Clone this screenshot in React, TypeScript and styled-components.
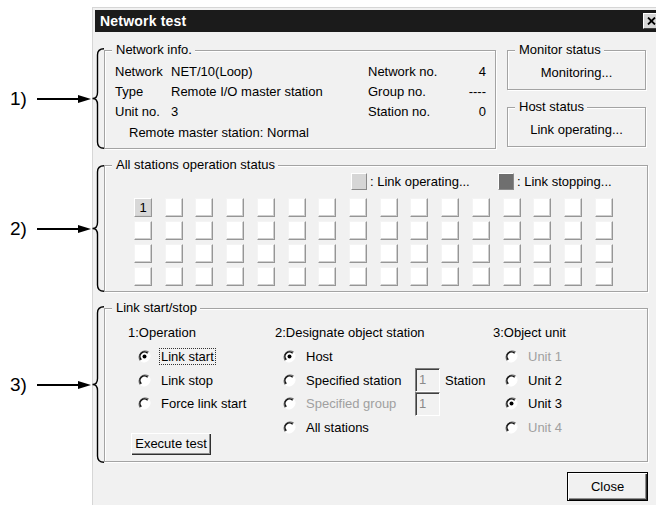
import React from "react";
import styled, { createGlobalStyle } from "styled-components";

const GlobalStyle = createGlobalStyle`
  html, body {
    margin: 0;
    padding: 0;
    background: #fff;
    overflow: hidden;
  }
  body {
    font-family: "Liberation Sans", Arial, sans-serif;
    font-size: 13px;
    color: #000;
  }
`;

const FACE = "#f1f1f1";

const Page = styled.div`
  position: relative;
  width: 656px;
  height: 505px;
  padding: 7px 0 0 92px;
  box-sizing: border-box;
  overflow: hidden;
`;

const Dialog = styled.div`
  width: 570px;
  height: 520px;
  box-sizing: border-box;
  border: 1px solid #d6d6d6;
  padding: 2px;
  background: ${FACE};
`;

const TitleBar = styled.div`
  height: 22px;
  background: #1b1b1b;
  display: flex;
  align-items: center;
  justify-content: space-between;
  padding-left: 5px;
`;

const Title = styled.span`
  color: #fff;
  font-weight: 700;
  font-size: 14px;
  letter-spacing: 0.2px;
`;

const CloseBox = styled.div`
  width: 16px;
  height: 16px;
  box-sizing: border-box;
  background: #d6d6d6;
  border-top: 1px solid #fff;
  border-left: 1px solid #fff;
  border-right: 1px solid #404040;
  border-bottom: 1px solid #404040;
  display: flex;
  align-items: center;
  justify-content: center;
`;

const Body = styled.div`
  padding: 18px 0 0 9px;
  width: 544px;
`;

const TopRow = styled.div`
  display: flex;
  align-items: flex-start;
`;

const SideColumn = styled.div`
  margin-left: 11px;
  display: flex;
  flex-direction: column;
  gap: 17px;
`;

const Group = styled.div<{ $w?: number; $h: number; $mt?: number }>`
  position: relative;
  box-sizing: border-box;
  width: ${({ $w }) => ($w ? `${$w}px` : "100%")};
  height: ${({ $h }) => $h}px;
  margin-top: ${({ $mt }) => $mt ?? 0}px;
  border: 1px solid #a3a3a3;
  box-shadow: 1px 1px 0 #fff, inset 1px 1px 0 #fff;
`;

const Legend = styled.span`
  position: absolute;
  top: -9px;
  left: 7px;
  padding: 0 3px 0 4px;
  background: ${FACE};
  line-height: 16px;
`;

const InfoGrid = styled.div`
  display: grid;
  grid-template-columns: 56px 197px 1fr auto;
  line-height: 20px;
  padding: 11px 9px 0 10px;
`;

const Value = styled.span<{ $right?: boolean }>`
  text-align: ${({ $right }) => ($right ? "right" : "left")};
`;

const InfoNote = styled.div`
  line-height: 20px;
  padding: 1px 0 0 24px;
`;

const StatusText = styled.div`
  text-align: center;
  line-height: 20px;
  padding-top: 12px;
`;

const LegendRow = styled.div`
  display: grid;
  grid-template-columns: 147px auto;
  padding: 7px 0 0 246px;
  height: 17px;
`;

const LegendItem = styled.div`
  display: flex;
  align-items: center;
  gap: 3px;
`;

const Swatch = styled.span<{ $dark?: boolean }>`
  width: 16px;
  height: 17px;
  box-sizing: border-box;
  background: ${({ $dark }) => ($dark ? "#6f6f6f" : "#d6d6d6")};
  border-top: 1px solid #fff;
  border-left: 1px solid #fff;
  border-right: 1px solid #8a8a8a;
  border-bottom: 1px solid #8a8a8a;
`;

const StationGrid = styled.div`
  display: grid;
  grid-template-columns: repeat(16, 18px);
  grid-auto-rows: 19px;
  column-gap: 12.73px;
  row-gap: 4px;
  padding: 8px 0 0 29px;
`;

const Cell = styled.div<{ $on?: boolean }>`
  box-sizing: border-box;
  background: ${({ $on }) => ($on ? "#d8d8d8" : "#fff")};
  border-top: 1px solid ${({ $on }) => ($on ? "#fff" : "#f4f4f4")};
  border-left: 1px solid ${({ $on }) => ($on ? "#fff" : "#f4f4f4")};
  border-right: 1px solid #969696;
  border-bottom: 1px solid #969696;
  box-shadow: inset -1px -1px 0 #cfcfcf;
  display: flex;
  align-items: center;
  justify-content: center;
  font-size: 13px;
`;

const LinkColumns = styled.div`
  display: grid;
  grid-template-columns: 147px 218px 1fr;
  padding: 14px 0 0 23px;
`;

const Column = styled.div`
  display: flex;
  flex-direction: column;
`;

const Heading = styled.div`
  line-height: 20px;
  height: 22px;
`;

const RadioList = styled.div<{ $indent: number }>`
  display: flex;
  flex-direction: column;
  padding-left: ${({ $indent }) => $indent}px;
`;

const RadioRow = styled.div<{ $disabled?: boolean }>`
  height: 23.5px;
  display: flex;
  align-items: center;
  gap: 9px;
  color: ${({ $disabled }) => ($disabled ? "#a0a0a0" : "#000")};
`;

const RadioLabel = styled.span<{ $w?: number; $focus?: boolean }>`
  width: ${({ $w }) => ($w ? `${$w}px` : "auto")};
  line-height: 15px;
  padding: 0 1px;
  margin-left: -1px;
  border: 1px dotted ${({ $focus }) => ($focus ? "#333" : "transparent")};
`;

const NumberBox = styled.div`
  width: 25px;
  height: 24px;
  box-sizing: border-box;
  border-top: 1px solid #808080;
  border-left: 1px solid #808080;
  border-right: 1px solid #fff;
  border-bottom: 1px solid #fff;
  box-shadow: inset 1px 1px 0 #404040;
  color: #8a8a8a;
  padding: 3px 0 0 3px;
  line-height: 16px;
`;

const Unit = styled.span`
  margin-left: -4px;
  color: #000;
`;

const PushButton = styled.div<{ $w: number; $h: number; $default?: boolean }>`
  width: ${({ $w }) => $w}px;
  height: ${({ $h }) => $h}px;
  box-sizing: border-box;
  display: flex;
  align-items: center;
  justify-content: center;
  background: ${FACE};
  border: 1px solid ${({ $default }) => ($default ? "#000" : "transparent")};
  box-shadow: inset 1px 1px 0 #fff, inset -1px -1px 0 #303030,
    inset -2px -2px 0 #909090;
`;

const ExecuteWrap = styled.div`
  margin: 16px 0 0 2px;
`;

const Footer = styled.div`
  display: flex;
  justify-content: flex-end;
  margin-top: 10px;
`;

const Callout = styled.div<{ $top: number }>`
  position: absolute;
  left: 0;
  top: ${({ $top }) => $top}px;
  display: flex;
  align-items: center;
`;

const CalloutLabel = styled.span`
  width: 27px;
  padding-left: 10px;
  font-family: "Liberation Sans", Arial, sans-serif;
  font-size: 19px;
  line-height: 20px;
`;

const Radio = ({ checked }: { checked?: boolean }) => (
  <svg width="13" height="13" viewBox="0 0 13 13">
    <circle cx="6.5" cy="6.5" r="5.5" fill="#fff" />
    <path d="M2.3 10.7 A6 6 0 0 1 10.7 2.3" stroke="#6a6a6a" strokeWidth="1.1" fill="none" />
    <path d="M3.3 9.7 A4.5 4.5 0 0 1 9.7 3.3" stroke="#111" strokeWidth="1.5" fill="none" />
    <path d="M10.7 2.3 A6 6 0 0 1 2.3 10.7" stroke="#fff" strokeWidth="1" fill="none" />
    {checked && <circle cx="6.5" cy="6.5" r="2" fill="#000" />}
  </svg>
);

const Brace = ({ h }: { h: number }) => {
  const m = h / 2;
  return (
    <svg width="14" height={h} viewBox={`0 0 14 ${h}`}>
      <path
        d={`M13 0.8 Q6.5 0.8 6.5 7 L6.5 ${m - 6} Q6.5 ${m} 1.5 ${m} Q6.5 ${m} 6.5 ${m + 6} L6.5 ${h - 7} Q6.5 ${h - 0.8} 13 ${h - 0.8}`}
        stroke="#000"
        strokeWidth="1.4"
        fill="none"
      />
    </svg>
  );
};

const Arrow = () => (
  <svg width="54" height="10" viewBox="0 0 54 10">
    <line x1="0" y1="5" x2="44" y2="5" stroke="#000" strokeWidth="2" />
    <polygon points="41,1 54,5 41,9" fill="#000" />
  </svg>
);

const Marker = ({ label, top, h }: { label: string; top: number; h: number }) => (
  <Callout $top={top}>
    <CalloutLabel>{label}</CalloutLabel>
    <Arrow />
    <Brace h={h} />
  </Callout>
);

const cells = Array.from({ length: 64 }, (_, i) => i);

export default function App() {
  return (
    <Page>
      <GlobalStyle />
      <Dialog>
        <TitleBar>
          <Title>Network test</Title>
          <CloseBox>
            <svg width="9" height="8" viewBox="0 0 9 8">
              <path d="M1 0.5 L8 7.5 M8 0.5 L1 7.5" stroke="#000" strokeWidth="1.8" />
            </svg>
          </CloseBox>
        </TitleBar>
        <Body>
          <TopRow>
            <Group $w={392} $h={99}>
              <Legend>Network info.</Legend>
              <InfoGrid>
                <span>Network</span>
                <span>NET/10(Loop)</span>
                <span>Network no.</span>
                <Value $right>4</Value>
                <span>Type</span>
                <span>Remote I/O master station</span>
                <span>Group no.</span>
                <Value $right>----</Value>
                <span>Unit no.</span>
                <span>3</span>
                <span>Station no.</span>
                <Value $right>0</Value>
              </InfoGrid>
              <InfoNote>Remote master station: Normal</InfoNote>
            </Group>
            <SideColumn>
              <Group $w={139} $h={40}>
                <Legend>Monitor status</Legend>
                <StatusText>Monitoring...</StatusText>
              </Group>
              <Group $w={139} $h={40}>
                <Legend>Host status</Legend>
                <StatusText>Link operating...</StatusText>
              </Group>
            </SideColumn>
          </TopRow>

          <Group $h={127} $mt={16}>
            <Legend>All stations operation status</Legend>
            <LegendRow>
              <LegendItem>
                <Swatch />
                <span>: Link operating...</span>
              </LegendItem>
              <LegendItem>
                <Swatch $dark />
                <span>: Link stopping...</span>
              </LegendItem>
            </LegendRow>
            <StationGrid>
              {cells.map((i) => (
                <Cell key={i} $on={i === 0}>
                  {i === 0 ? "1" : null}
                </Cell>
              ))}
            </StationGrid>
          </Group>

          <Group $h={154} $mt={16}>
            <Legend>Link start/stop</Legend>
            <LinkColumns>
              <Column>
                <Heading>1:Operation</Heading>
                <RadioList $indent={10}>
                  <RadioRow>
                    <Radio checked />
                    <RadioLabel $focus>Link start</RadioLabel>
                  </RadioRow>
                  <RadioRow>
                    <Radio />
                    <RadioLabel>Link stop</RadioLabel>
                  </RadioRow>
                  <RadioRow>
                    <Radio />
                    <RadioLabel>Force link start</RadioLabel>
                  </RadioRow>
                </RadioList>
                <ExecuteWrap>
                  <PushButton $w={82} $h={24}>Execute test</PushButton>
                </ExecuteWrap>
              </Column>
              <Column>
                <Heading>2:Designate object station</Heading>
                <RadioList $indent={8}>
                  <RadioRow>
                    <Radio checked />
                    <RadioLabel>Host</RadioLabel>
                  </RadioRow>
                  <RadioRow>
                    <Radio />
                    <RadioLabel $w={98}>Specified station</RadioLabel>
                    <NumberBox>1</NumberBox>
                    <Unit>Station</Unit>
                  </RadioRow>
                  <RadioRow $disabled>
                    <Radio />
                    <RadioLabel $w={98}>Specified group</RadioLabel>
                    <NumberBox>1</NumberBox>
                  </RadioRow>
                  <RadioRow>
                    <Radio />
                    <RadioLabel>All stations</RadioLabel>
                  </RadioRow>
                </RadioList>
              </Column>
              <Column>
                <Heading>3:Object unit</Heading>
                <RadioList $indent={12}>
                  <RadioRow $disabled>
                    <Radio />
                    <RadioLabel>Unit 1</RadioLabel>
                  </RadioRow>
                  <RadioRow>
                    <Radio />
                    <RadioLabel>Unit 2</RadioLabel>
                  </RadioRow>
                  <RadioRow>
                    <Radio checked />
                    <RadioLabel>Unit 3</RadioLabel>
                  </RadioRow>
                  <RadioRow $disabled>
                    <Radio />
                    <RadioLabel>Unit 4</RadioLabel>
                  </RadioRow>
                </RadioList>
              </Column>
            </LinkColumns>
          </Group>

          <Footer>
            <PushButton $w={81} $h={29} $default>Close</PushButton>
          </Footer>
        </Body>
      </Dialog>

      <Marker label="1)" top={48} h={101} />
      <Marker label="2)" top={165} h={127} />
      <Marker label="3)" top={306} h={157} />
    </Page>
  );
}
